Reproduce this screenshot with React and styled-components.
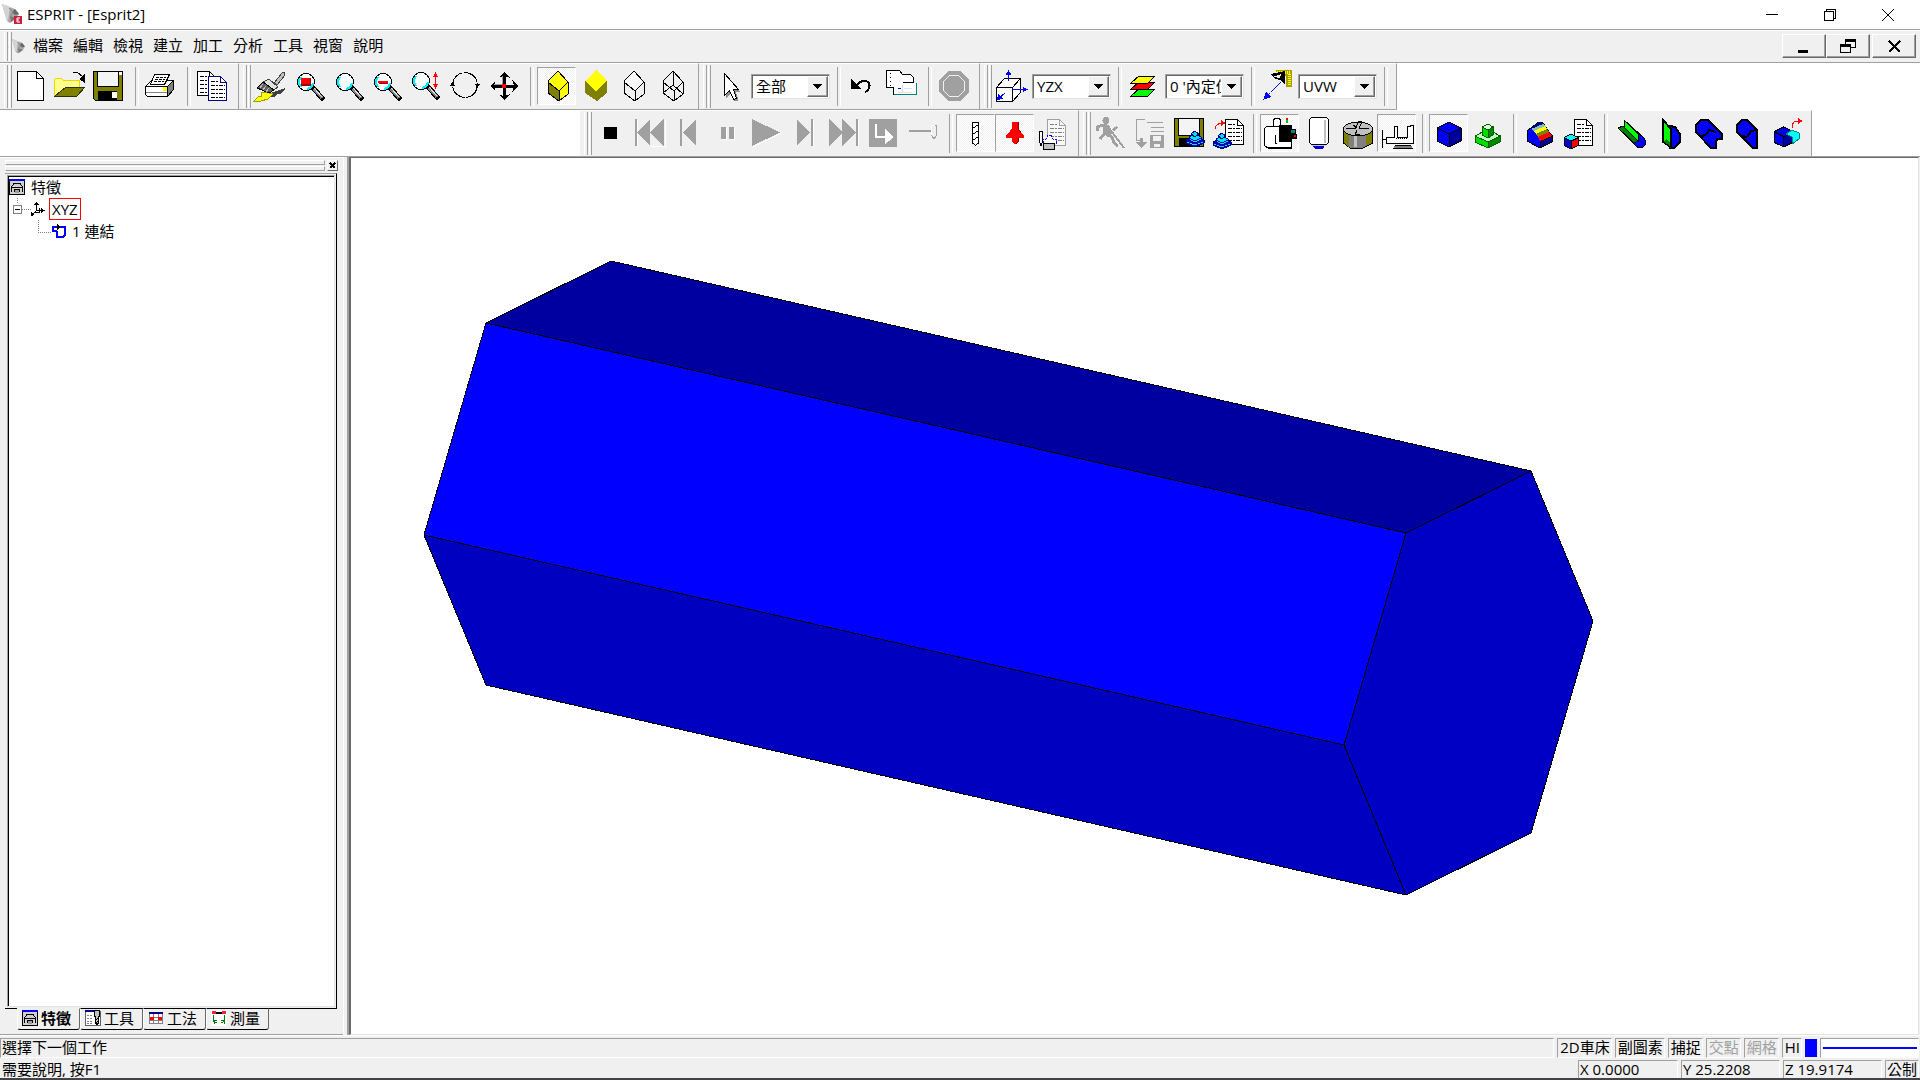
import React from 'react';
import styled, { createGlobalStyle, css } from 'styled-components';

const GlobalStyle = createGlobalStyle`
  * {
    box-sizing: border-box;
  }

  body {
    margin: 0;
    background-color: #f0f0f0;
    color: black;
  }

  body, button, select {
    font-family: 'Open Sans', 'Noto Sans CJK TC', sans-serif;
    font-size: 15px;
    line-height: 20px;
  }
`;

const Window = styled.div`
  min-height: 100vh;
  display: flex;
  flex-direction: column;
`;

/* title bar and menu bar */

const TitleBar = styled.header`
  display: flex;
  align-items: center;
  height: 30px;
  padding: 0 3px 0 2px;
  background-color: white;
  border-bottom: 1px solid #a0a0a0;
`;

const Title = styled.h1`
  flex: 1;
  margin: 0 0 2px 4px;
  font-size: 15px;
  font-weight: normal;
`;

const CaptionButton = styled.button`
  display: flex;
  align-items: center;
  justify-content: center;
  width: 58px;
  height: 28px;
  padding: 0;
  border: 0;
  background: none;
`;

const MenuBar = styled.nav`
  display: flex;
  align-items: center;
  height: 33px;
  padding-right: 4px;
  border-top: 1px solid white;
  border-bottom: 1px solid #a0a0a0;
`;

const MenuItem = styled.button`
  padding: 0 5px 3px;
  border: 0;
  background: none;
  white-space: nowrap;
`;

const Fill = styled.div`
  flex: 1;
`;

const ChildButton = styled.button`
  display: flex;
  align-items: center;
  justify-content: center;
  width: 44px;
  height: 24px;
  padding: 0;
  margin: 0 0 1px ${props => props.$apart ? '2px' : '0'};
  background-color: #f0f0f0;
  border: 1px solid;
  border-color: white #696969 #696969 white;
  box-shadow: inset -1px -1px 0 #a0a0a0;
`;

/* toolbars */

const ToolRow = styled.div`
  display: flex;
  background-color: white;
`;

const RowSpace = styled.div`
  flex: ${props => props.$width ? `0 0 ${props.$width}` : '1'};
  border-bottom: ${props => props.$ruled ? '1px solid #a0a0a0' : '0'};
`;

const Band = styled.div`
  display: flex;
  height: 47px;
  padding: 3px 5px 0 0;
  background-color: #f0f0f0;
  border: 1px solid #a0a0a0;
  border-top-color: white;
  border-left: 0;
`;

const Grip = styled.div`
  display: flex;
  gap: 1px;
  flex: none;
  width: 12px;
  height: ${props => props.$menu ? '29px' : '43px'};
  margin-top: ${props => props.$menu ? '0' : '-2px'};
  padding-left: 4px;

  &::before, &::after {
    content: '';
    width: 3px;
    border-left: 1px solid white;
    border-right: 1px solid #a0a0a0;
  }
`;

const Divider = styled.div`
  width: 13px;
  height: 39px;
  padding-left: 6px;

  &::before {
    content: '';
    display: block;
    width: 2px;
    height: 100%;
    border-left: 1px solid #a0a0a0;
    border-right: 1px solid white;
  }
`;

const pressed = css`
  border-color: #a0a0a0 white white #a0a0a0;
  background: repeating-conic-gradient(white 0 25%, #f0f0f0 0 50%) 0 0 / 2px 2px;
`;

const ToolButton = styled.button`
  flex: none;
  width: 39px;
  height: 38px;
  padding: 2px;
  border: 1px solid transparent;
  background: none;
  ${props => props.$on && pressed}

  svg {
    display: block;
    width: 32px;
    height: 32px;
    overflow: visible;
  }
`;

const ComboBox = styled.div`
  display: flex;
  flex: none;
  width: 79px;
  height: 25px;
  margin: 7px 1px 0;
  padding: 1px;
  background-color: white;
  border: 1px solid;
  border-color: #a0a0a0 #e3e3e3 #e3e3e3 #a0a0a0;
  box-shadow: inset 1px 1px 0 #696969;

  select {
    appearance: none;
    flex: 1;
    min-width: 0;
    padding: 0 0 2px 3px;
    border: 0;
    background: none;
    color: black;
    outline: 0;
  }
`;

const ComboArrow = styled.span`
  display: flex;
  align-items: center;
  justify-content: center;
  width: 21px;
  background-color: #f0f0f0;
  border: 1px solid;
  border-color: white #696969 #696969 white;
  box-shadow: inset -1px -1px 0 #a0a0a0;
`;

/* feature manager */

const Main = styled.main`
  display: flex;
  flex: 1;
`;

const SidePanel = styled.aside`
  display: flex;
  flex-direction: column;
  width: 343px;
  border-top: 1px solid white;
  border-bottom: 1px solid #a0a0a0;
`;

const Splitter = styled.div`
  width: 6px;
  border-left: 1px solid white;
  border-right: 2px solid #a0a0a0;
`;

const PanelHead = styled.div`
  display: flex;
  align-items: center;
  gap: 2px;
  padding: 2px 5px 0;
`;

const PanelGrip = styled.div`
  flex: 1;

  &::before, &::after {
    content: '';
    display: block;
    height: 3px;
    border: 1px solid;
    border-color: white #a0a0a0 #a0a0a0 white;
  }

  &::after {
    margin-top: 1px;
  }
`;

const PanelClose = styled.button`
  display: flex;
  align-items: center;
  justify-content: center;
  width: 11px;
  height: 11px;
  padding: 0;
  background-color: #f0f0f0;
  border: 1px solid;
  border-color: white #696969 #696969 white;
`;

const TabPage = styled.div`
  flex: 1;
  display: flex;
  margin: 2px 6px 0 5px;
  padding: 1px 1px 1px 2px;
  border: 1px solid;
  border-color: #a0a0a0 black black #f0f0f0;
  border-left: 0;
`;

const Tree = styled.ul`
  flex: 1;
  margin: 0;
  padding: 0;
  list-style: none;
  background-color: white;
  border: 1px solid;
  border-color: #a0a0a0 #e3e3e3 #e3e3e3 #a0a0a0;
  box-shadow: inset 1px 1px 0 black;

  ul {
    margin: 0;
    padding: 0;
    list-style: none;
  }
`;

const TreeRow = styled.div`
  display: flex;
  align-items: center;
  height: 22px;
  padding-left: ${props => props.$indent || '1px'};

  span {
    margin-left: 6px;
  }
`;

const Active = styled.b`
  height: 22px;
  margin-left: 4px;
  padding: 0 2px;
  border: 1px solid red;
  font-weight: normal;
`;

const Tabs = styled.div`
  display: flex;
  margin-top: -1px;
  padding: 0 0 4px 17px;
`;

const Tab = styled.button`
  display: flex;
  align-items: center;
  gap: 3px;
  width: 63px;
  height: 22px;
  padding: 0 0 2px 4px;
  background-color: #f0f0f0;
  border: 1px solid;
  border-color: ${props => props.$on ? '#f0f0f0' : 'black'} #696969 black white;
  border-radius: 0 0 3px 3px;
  font-weight: ${props => props.$on ? 'bold' : 'normal'};
  white-space: nowrap;
`;

/* model view */

const Viewport = styled.section`
  flex: 1;
  display: flex;
  min-width: 0;
  margin-right: 1px;
  background-color: white;
  border: 1px solid;
  border-width: 1px 1px 1px 2px;
  border-color: #696969 #e3e3e3 #e3e3e3 #696969;

  svg {
    flex: 1;
    width: 100%;
    min-width: 0;
  }
`;

/* status bar */

const StatusBar = styled.footer`
  display: flex;
  flex-direction: column;
  gap: 2px;
  padding: 2px 1px 0 0;
  border-top: 1px solid white;
  border-bottom: 2px solid #444347;
`;

const StatusRow = styled.div`
  display: flex;
  gap: 3px;
`;

const Cell = styled.div`
  flex: ${props => props.$grow ? '1' : 'none'};
  width: ${props => props.$width || 'auto'};
  height: ${props => props.$short ? '18px' : '20px'};
  padding: 0 1px 0 ${props => props.$short || props.$grow ? '1px' : '2px'};
  line-height: 16px;
  white-space: nowrap;
  color: ${props => props.$off ? '#a0a0a0' : 'black'};
  border: 1px solid;
  border-color: #a0a0a0 white white #a0a0a0;
  ${props => props.$short && 'border-bottom: 0;'}
  ${props => props.$plain && 'border-color: transparent;'}
`;

const Swatch = styled.div`
  width: 12px;
  height: 18px;
  margin-top: 1px;
  background-color: blue;
`;

const LineSample = styled.div`
  display: flex;
  align-items: center;
  width: 99px;
  padding: 0 1px 0 2px;
  background-color: white;
  border: 1px solid;
  border-color: #a0a0a0 white white #a0a0a0;

  &::before {
    content: '';
    flex: 1;
    height: 2px;
    background-color: blue;
  }
`;

/* drawings */

const Svg = ({ size = 32, width = size, height = size, children }) => (
  <svg
    width={width}
    height={height}
    viewBox={`0 0 ${width} ${height}`}
    fill="none"
    shapeRendering="crispEdges"
    aria-hidden="true"
  >
    {children}
  </svg>
);

const Cone = ({ size, badge }) => (
  <svg width={size} height={size} viewBox="0 0 21 21" aria-hidden="true">
    <path d="M0 0L13 5L17 10L14 15L8 19L5 17Z" fill="#a8a8a8" />
    <path d="M0 0L8 3L7 10L6 17L4 14Z" fill="#d4d4d4" />
    <path d="M13 5L17 10L13 11L10 8Z" fill="#686868" />
    <path d="M8 12L14 14L9 18Z" fill="#787878" />
    <path d="M7 4L11 8L9 12" stroke="#888" fill="none" />
    {badge && <rect x="12" y="12" width="8" height="8" fill="#c4203f" />}
    {badge && <path d="M18 14H15V18H18M15 16H17" stroke="#fff" fill="none" />}
  </svg>
);

const Lens = ({ x = 13, y = 12, children }) => (
  <g>
    <path d={`M${x + 8} ${y + 7}L${x + 16} ${y + 16}`} stroke="#000" strokeWidth="5" strokeLinecap="square" />
    <path d={`M${x + 8} ${y + 7}L${x + 16} ${y + 16}`} stroke="#808080" strokeWidth="3" />
    <path d={`M${x + 8} ${y + 6}L${x + 16} ${y + 15}`} stroke="#e0e0e0" />
    <circle cx={x} cy={y} r="8.5" fill="#f8ffff" stroke="#000" />
    <path d={`M${x - 5} ${y - 5}Q${x - 9} ${y} ${x - 5} ${y + 5}M${x + 1} ${y + 7}Q${x + 6} ${y + 6} ${x + 7} ${y + 1}`} stroke="#00f0ff" strokeWidth="2" />
    {children}
  </g>
);

const Page = ({ x, y, w, h, color = '#000', ink = '#000', fill = '#fff' }) => (
  <g>
    <path d={`M${x} ${y}H${x + w - 6}L${x + w} ${y + 6}V${y + h}H${x}Z`} fill={fill} stroke={color} />
    <path d={`M${x + w - 6} ${y}V${y + 6}H${x + w}`} stroke={color} />
    <path
      d={`M${x + 2} ${y + 5}H${x + w - 8}M${x + 2} ${y + 9}H${x + w - 2}M${x + 2} ${y + 13}H${x + w - 2}M${x + 2} ${y + 17}H${x + w - 2}M${x + 2} ${y + 21}H${x + w - 2}`}
      stroke={ink}
      strokeDasharray="4 1 2 1"
    />
  </g>
);

const Disk = () => (
  <g>
    <path d="M0.5 1.5H29.5V30.5H2.5L0.5 28.5Z" fill="#808000" stroke="#000" />
    <path d="M4.5 1.5H25.5V16.5H4.5Z" fill="#f4f4f4" stroke="#000" />
    <path d="M5 21H24V30H5Z" fill="#000" />
    <path d="M19 22H24V28H19ZM26 2H29V5H26Z" fill="#fff" />
  </g>
);

const Block = ({ x = 0, y = 0, top, left, right, line = '#000' }) => (
  <g transform={`translate(${x} ${y})`} stroke={line} strokeLinejoin="round">
    <path d="M11 1L1 11V23L12 31L21 24V12Z" fill={top} />
    <path d="M1 12L12 21V31L1 23Z" fill={left} />
    <path d="M21 12L12 21V31L21 24Z" fill={right} />
  </g>
);

const IsoCube = ({ x = 0, y = 0, s = 1, top, left, right }) => (
  <g transform={`translate(${x} ${y}) scale(${s})`} stroke="#000" strokeWidth={1 / s} strokeLinejoin="round">
    <path d="M12 0L24 6L12 12L0 6Z" fill={top} />
    <path d="M0 6L12 12V25L0 19Z" fill={left} />
    <path d="M24 6L12 12V25L24 19Z" fill={right} />
  </g>
);

const Stack = ({ x, y }) => (
  <g transform={`translate(${x} ${y})`} stroke="#000080">
    <path d="M0 9L9 5L18 9V12L9 16L0 12Z" fill="#0000c0" />
    <path d="M3 6L9 3L15 6V9L9 12L3 9Z" fill="#00e0f0" />
    <path d="M5 3L9 0L13 3L9 6Z" fill="#00e0f0" />
    <path d="M3 7L9 10L15 7" stroke="#0000c0" />
    <path d="M1 11L9 14L17 11" stroke="#00e0f0" strokeDasharray="2 1" />
  </g>
);

const GREY = '#a0a0a0';

const icons = {
  new: (
    <g stroke="#000">
      <path d="M2.5 1.5H21.5L28.5 8.5V30.5H2.5Z" fill="#fff" />
      <path d="M21.5 1.5V8.5H28.5" />
    </g>
  ),
  open: (
    <g>
      <path d="M0 26V10L2 8H7L9 10H25V17H13L1 26Z" fill="#ffff8c" stroke="#e8d800" />
      <path d="M12 17H31L23 26H1Z" fill="#808000" stroke="#303000" />
      <path d="M19 2H23L29 7V9" stroke="#000" strokeWidth="1" />
      <path d="M25 9L31 4V13Z" fill="#000" />
    </g>
  ),
  save: <Disk />,
  print: (
    <g stroke="#000">
      <path d="M0.5 16.5L6.5 10.5H28.5V19.5L22.5 26.5H2.5L0.5 24.5Z" fill="#fff" />
      <path d="M22.5 16.5L28.5 10.5V19.5L22.5 26.5Z" fill="#808080" />
      <path d="M9.5 4.5H24.5L19.5 14.5H5.5Z" fill="#fff" />
      <path d="M11 7.5H21M10 9.5H20M9 11.5H19" strokeDasharray="3 1" />
      <path d="M0.5 16.5H22.5V24.5" />
      <path d="M1 22.5H22" stroke="#808080" />
      <path d="M18 17H22V21H18Z" fill="#ff0" stroke="none" />
    </g>
  ),
  pages: (
    <g>
      <Page x={0.5} y={1.5} w={18} h={24} />
      <Page x={11.5} y={6.5} w={18} h={24} color="#000080" />
    </g>
  ),
  brush: (
    <g>
      <path d="M14 24L31 18V20L26 24H24L20 27H14Z" fill="#404040" />
      <path d="M0 31L4 27L8 26L7 22L12 22L19 24L14 29L7 31Z" fill="#ff0" stroke="#a0a000" />
      <path d="M20 13L28 3L30 2L31 5L23 15Z" fill="#c0c0c0" stroke="#404040" />
      <path d="M9 12L15 9L24 17L20 20Z" fill="#e0e0e0" stroke="#404040" />
      <path d="M9 12L3 18L15 23L20 20Z" fill="#606060" stroke="#000" />
      <path d="M9 14L6 18M12 16L9 20M15 18L12 22" stroke="#c0c0c0" />
    </g>
  ),
  zoomWindow: (
    <Lens>
      <path d="M8 8H18V16H8Z" fill="#a00000" />
      <path d="M8 8H17V14H8Z" fill="#f00" />
    </Lens>
  ),
  zoom: <Lens />,
  zoomOut: (
    <Lens x={12}>
      <path d="M7 11H17V13H7Z" fill="#f00" />
      <path d="M8 13H17V14H8Z" fill="#a00000" />
    </Lens>
  ),
  zoomDynamic: (
    <g>
      <Lens x={11} y={11} />
      <path d="M25.5 4V17" stroke="#f00" />
      <path d="M23 7L25.5 2L28 7ZM23 14H28L25.5 19Z" fill="#f00" />
    </g>
  ),
  rotate: (
    <g>
      <circle cx="16" cy="15" r="12.5" stroke="#000" strokeDasharray="18 1" />
      <path d="M1 16L4 11L6 16ZM26 14H31L28 19Z" fill="#000" />
    </g>
  ),
  pan: (
    <g>
      <path d="M16 4V28M4 16H28" stroke="#000" strokeWidth="3" />
      <path d="M14.5 6V14M6 14.5H14" stroke="#a0a0a0" />
      <path d="M10 8L16 2L22 8L17 6H15ZM10 24L16 30L22 24L17 26H15ZM8 10L2 16L8 22L6 17V15ZM24 10L30 16L24 22L26 17V15Z" fill="#000" />
      <circle cx="16" cy="16" r="2.5" fill="#f00" />
    </g>
  ),
  shadedEdges: <Block x={7} top="#ff0" left="#808000" right="#ff0" />,
  shaded: (
    <g>
      <path d="M17 0L28 11L17 22L6 11Z" fill="#ff0" />
      <path d="M6 11L17 21L28 11V23L18 31L6 23Z" fill="#808000" />
    </g>
  ),
  hidden: <Block x={5} top="#f8f8f8" left="#f0f0f0" right="#f0f0f0" />,
  wire: (
    <g>
      <Block x={5} top="none" left="none" right="none" />
      <path d="M16 1V15L6 23M16 15L26 24" stroke="#000" />
    </g>
  ),
  cursor: (
    <g>
      <path d="M12 6V28L17 23L20 31H24V28L22 22H26Z" fill="#909090" />
      <path d="M10.5 3.5V25.5L15.5 20.5L19.5 29.5L22.5 28.5L19.5 19.5H24.5Z" fill="#fff" stroke="#000" />
    </g>
  ),
  undo: (
    <g>
      <path d="M9 17Q13 10 19 11Q24 13 22 18Q21 21 18 22" stroke="#000" strokeWidth="2" />
      <path d="M4 9V19H14Z" fill="#000" />
    </g>
  ),
  paste: (
    <g>
      <path d="M0.5 0.5H13.5L16.5 4.5H24.5L27.5 7.5V17.5H0.5Z" fill="#fff" stroke="#000" />
      <path d="M4.5 3V16" stroke="#000" strokeDasharray="1 3" />
      <path d="M7.5 24.5V14.5H14.5L17.5 12.5H30.5V24.5Z" fill="#fff" stroke="none" />
      <path d="M7 24.5H30.5V12.5" stroke="#008080" />
      <path d="M7.5 24.5V17.5M17 12.5H28" stroke="#000" />
      <path d="M12 18H15V19H12Z" fill="#00f" />
      <path d="M18 18.5H26M12 22.5H26M16.5 15V23" stroke="#e0e0e0" />
    </g>
  ),
  octagon: (
    <g>
      <path d="M10 1H22L31 10V22L22 31H10L1 22V10Z" fill={GREY} />
      <path d="M11.5 5.5H20.5L26.5 11.5V20.5L20.5 26.5H11.5L5.5 20.5V11.5Z" stroke="#f0f0f0" />
    </g>
  ),
  workplane: (
    <g>
      <path d="M1.5 17.5L9.5 8.5H25.5V22.5L17.5 31.5H1.5Z" fill="#fff" stroke="#000" />
      <path d="M1.5 17.5H17.5V31.5M17.5 17.5L25.5 8.5" stroke="#000" />
      <path d="M13.5 11V2M17 19.5H30M10 23L4 28" stroke="#00f" />
      <path d="M10.5 5L13.5 0L16.5 5ZM28 17L33 19.5L28 22ZM2 30L3 24L8 29Z" fill="#00f" />
    </g>
  ),
  layers: (
    <g stroke="#000">
      <path d="M3 26L11 19H27L20 26Z" fill="#0f0" />
      <path d="M3 19L11 12H27L20 19Z" fill="#f00" />
      <path d="M3 13L11 6H27L20 13Z" fill="#ff0" />
    </g>
  ),
  uvw: (
    <g>
      <path d="M15 0H31V17H25V6H17Z" fill="#a8a000" />
      <path d="M16 2H30M28 4V16" stroke="#ff0" strokeDasharray="1 1" strokeWidth="3" />
      <path d="M9 4L24 1V15L20 10L14 9Z" fill="#000" />
      <path d="M12 7L20 4L19 8Z" fill="#f0f0f0" />
      <path d="M20 12L5 27" stroke="#00f" strokeDasharray="14 2" />
      <path d="M2 30L5 22L10 27Z" fill="#00f" />
    </g>
  ),
  stop: <path d="M9 10H22V22H9Z" fill="#000" />,
  first: (
    <g>
      <path d="M3 3V30M17 29L31 30V3" stroke="#fff" />
      <path d="M1 2H3V29H1ZM16 2V29L3 15.5ZM30 2V29L16 15.5Z" fill={GREY} />
    </g>
  ),
  back: <path d="M7 2H9V29H7ZM23 2V29L10 15.5Z" fill={GREY} />,
  pause: (
    <g>
      <path d="M10 11H15V23H10ZM18 11H23V23H18Z" fill="#fff" />
      <path d="M9 10H14V22H9ZM17 10H22V22H17Z" fill={GREY} />
    </g>
  ),
  play: (
    <g>
      <path d="M2 30L30 16" stroke="#fff" />
      <path d="M1 2L29 15.5L1 29Z" fill={GREY} />
    </g>
  ),
  forward: (
    <g>
      <path d="M23.5 3V30" stroke="#fff" />
      <path d="M7 2L20 15.5L7 29ZM21 2H23V29H21Z" fill={GREY} />
    </g>
  ),
  last: (
    <g>
      <path d="M29.5 3V30" stroke="#fff" />
      <path d="M0 2L14 15.5L0 29ZM13 2L27 15.5L13 29ZM27 2H29V29H27Z" fill={GREY} />
    </g>
  ),
  into: (
    <g>
      <path d="M1 2H29V30H1Z" fill={GREY} />
      <path d="M8 7V20H18" stroke="#fff" strokeWidth="2" />
      <path d="M17 12L25 19V21L17 27Z" fill="#fff" />
    </g>
  ),
  speed: (
    <g>
      <path d="M2 14.5H24" stroke="#fff" />
      <path d="M2 13.5H24" stroke={GREY} strokeWidth="2" />
      <path d="M24.5 8.5H29.5V18L27 22L24.5 18Z" fill="#f0f0f0" stroke={GREY} />
      <path d="M24.5 18V8.5H28" stroke="#fff" />
    </g>
  ),
  drill: (
    <g>
      <path d="M13.5 5.5H19.5V26L16.5 28.5L13.5 26Z" fill="#fff" stroke="#000" />
      <path d="M14 11L19 8M14 17L19 14M14 23L19 20" stroke="#000" strokeWidth="1" />
    </g>
  ),
  holder: (
    <g>
      <path d="M14 5H20V11L23 16L26 18V21H20V25L18 27H16L14 25V21H8V18L11 16L14 11Z" fill="#f00" />
      <path d="M20 5V11L23 16M20 21V25L18 27" stroke="#900000" />
    </g>
  ),
  toolDoc: (
    <g>
      <Page x={10.5} y={2.5} w={18} h={26} color="#a0a0a0" ink="#808080" fill="#f8f8f8" />
      <path d="M2.5 14.5H5.5V24L4 29L2.5 24Z" fill="#fff" stroke="#000" />
      <path d="M6 26V22H9L11 18H14L16 22H19V26Z" fill="#fff" stroke="#00f" strokeDasharray="2 1" />
      <path d="M6.5 26.5H17.5V32H6.5Z" fill="#c0c0c0" stroke="#000" />
    </g>
  ),
  run: (
    <g>
      <circle cx="12" cy="3.5" r="3.5" fill={GREY} />
      <path d="M3 14L3 10L9 8H13M12 17L18 20L20 26L24 29M11 16L6 22" stroke={GREY} strokeWidth="3" />
      <path d="M9 8H15L18 12L23 9L24 11L18 16L14 20L9 16Z" fill={GREY} />
      <path d="M16 10L31 32" stroke="#fff" />
      <path d="M15 11L30 31" stroke={GREY} strokeWidth="2" />
    </g>
  ),
  saveOp: (
    <g>
      <path d="M12 2.500H3V23H8" stroke={GREY} strokeWidth="1" />
      <path d="M7 21V25H2L8 31L14 25H10V21Z" fill={GREY} />
      <path d="M14 5.5H30M18 10.5H31M18 14.5H31" stroke={GREY} />
      <path d="M17 18H31V31H17Z" fill={GREY} />
      <path d="M20 19H28V24H20ZM21 27H27V30H21Z" fill="#f0f0f0" />
    </g>
  ),
  saveStock: (
    <g>
      <path d="M2.5 1.5H31.5V29.5H2.5Z" fill="#808000" stroke="#000" />
      <path d="M6.5 1.5H27.5V18.5H6.5Z" fill="#f4f4f4" stroke="#000" />
      <path d="M7 21H20V30H7Z" fill="#000" />
      <Stack x={14} y={14} />
    </g>
  ),
  loadStock: (
    <g>
      <Page x={14.5} y={2.5} w={18} h={25} />
      <Stack x={2} y={16} />
      <path d="M4 12Q5 6 12 6" stroke="#f00" strokeWidth="1" />
      <path d="M10 3L15 6L10 9Z" fill="#f00" />
    </g>
  ),
  machine: (
    <g>
      <path d="M10.5 10V3L12.5 1H15.5L17.5 3V10" fill="#fff" stroke="#000" />
      <path d="M1.5 11.5L3.5 9.5H28.5V30.5H4L1.5 28.5Z" fill="#fff" stroke="#000" />
      <path d="M3 30H29V32H5Z" fill="#000" />
      <path d="M16 8H29V25H16Z" fill="#000" />
      <path d="M12.5 18V26H14" stroke="#000" />
      <path d="M23 1H25V3H23Z" fill="#f00" />
      <path d="M23 3H25V6H23Z" fill="#0c0" />
      <path d="M23 6H25V8H23Z" fill="#fff" />
      <path d="M27 12H32V16H27Z" fill="#008080" stroke="#000" />
      <path d="M29 17H34V22H29Z" fill="#000" />
      <path d="M31 18H33V20H31Z" fill="#f00" />
    </g>
  ),
  spindle: (
    <g>
      <path d="M9 26H24L22 30L20 32H13L11 30Z" fill="#0000d0" />
      <path d="M7.5 2.5L9.5 0.5H24.5L26.5 2.5V25.5L24.5 27.5H9.5L7.5 25.5Z" fill="#fff" stroke="#000" strokeWidth="1" />
      <path d="M23 3V26" stroke="#c0c0c0" strokeWidth="2" />
      <path d="M10 28.5H24" stroke="#c0c0ff" />
    </g>
  ),
  chuck: (
    <g>
      <path d="M2.5 12V26L9 31H22L31.5 26V12Z" fill="#808080" stroke="#000" />
      <path d="M3 14L8 18V30L3 26ZM25 17L31 13V26L25 29Z" fill="#808000" />
      <ellipse cx="17" cy="12" rx="14.5" ry="7" fill="#c0c0c0" stroke="#000" />
      <path d="M5 11L14 12L18 4L21 5L18 11L28 12M16 13L14 18L19 17M12 8L16 11" stroke="#000" />
      <path d="M14 19V30" stroke="#c0c0c0" strokeWidth="3" />
    </g>
  ),
  fixture: (
    <g stroke="#000">
      <path d="M2.5 13V31M2 22.5H8" />
      <path d="M6.5 20.5H14.5V9.5H17.5V20.5H27.5V9.5H30.5V8.5H33.5V26.5H6.5Z" fill="#fff" />
      <path d="M16 21.5H28" strokeDasharray="1 1" />
      <path d="M15 28.5H31M13 31.5H33" />
      <path d="M14 30H32" stroke="#808080" strokeWidth="2" />
    </g>
  ),
  solid: <IsoCube x={5} y={5} top="#00f" left="#0000f0" right="#00009c" />,
  part: (
    <g stroke="#006000">
      <path d="M4 19L17 12L29 19V25L17 31L4 25Z" fill="#0d0" />
      <path d="M17 25L29 19V25L17 31Z" fill="#008800" />
      <path d="M4 19L17 12L29 19L17 25Z" fill="#c0ffc0" />
      <path d="M11 10L17 7L22 10V18L17 21L11 18Z" fill="#0d0" />
      <path d="M17 13L22 10V18L17 21Z" fill="#008800" />
      <path d="M11 10L17 7L22 10L17 13Z" fill="#e0ffe0" />
    </g>
  ),
  rainbow: (
    <g stroke="#000">
      <path d="M4 14L16 5L20 6L29 19V25L17 31L4 24Z" fill="#00f" />
      <path d="M17 25L29 19V25L17 31Z" fill="#000090" />
      <path d="M16 5L20 6L22 9L11 12L8 11Z" fill="#000080" stroke="none" />
      <path d="M8 12L20 7L23 10L11 14Z" fill="#80c0c0" stroke="none" />
      <path d="M11 14L22 9L24 12L13 17Z" fill="#ff0" stroke="none" />
      <path d="M13 17L24 12L26 15L15 20Z" fill="#808000" stroke="none" />
      <path d="M15 20L26 15L29 19L17 24Z" fill="#f00" stroke="none" />
    </g>
  ),
  cubeDoc: (
    <g>
      <Page x={12.5} y={2.5} w={18} h={26} />
      <IsoCube x={2} y={17} s={0.6} top="#0ff" left="#0000d0" right="#f00" />
    </g>
  ),
  slotA: (
    <g stroke="#000">
      <path d="M4 11L10 9V3L30 21Q34 26 29 30Q25 32 22 29Z" fill="#00f" />
      <path d="M10 3L12 5L24 17V24L10 12Z" fill="#0f0" />
      <path d="M4 11L9 9L24 24L20 26Z" fill="#008000" />
    </g>
  ),
  slotB: (
    <g stroke="#000">
      <path d="M17 9L22 10L27 17V25L21 31H17Z" fill="#00f" strokeWidth="2" />
      <path d="M10 3L18 12V30L10 25Z" fill="#0f0" strokeWidth="2" />
      <path d="M13 22L17 25V29L11 25Z" fill="#008000" stroke="none" />
    </g>
  ),
  slotC: (
    <g stroke="#000" strokeWidth="2">
      <path d="M4 8L9 3H16L30 17V22H25L24 25V31H19L4 15Z" fill="#00f" />
      <path d="M14 18L17 13L24 15M14 18L9 19" />
    </g>
  ),
  slotD: (
    <g stroke="#000" strokeWidth="2">
      <path d="M6 8L11 3H16L26 13V31H22L6 15Z" fill="#00f" />
      <path d="M16 20L20 14L26 13M16 20L11 19" />
    </g>
  ),
  extract: (
    <g>
      <IsoCube x={4} y={10} s={0.8} top="#0000e0" left="#00f" right="#00009c" />
      <path d="M16 17L22 13L29 16V22L22 27V20Z" fill="#0ff" stroke="#008080" />
      <path d="M22 11V8L25 4H29" stroke="#f00" />
      <path d="M28 1L33 4L28 7Z" fill="#f00" />
    </g>
  )
};

const Tool = ({ name, label, on }) => (
  <ToolButton $on={on} aria-label={label || name} aria-pressed={on}>
    <Svg>{icons[name]}</Svg>
  </ToolButton>
);

const Combo = ({ label, value }) => (
  <ComboBox>
    <select aria-label={label} defaultValue={value}>
      <option>{value}</option>
    </select>
    <ComboArrow aria-hidden="true">
      <Svg width={9} height={5}><path d="M0 0H9L4.5 5Z" fill="#000" /></Svg>
    </ComboArrow>
  </ComboBox>
);

const FeatureIcon = () => (
  <Svg size={16}>
    <path d="M0.5 0.5H15.5V15.5H0.5Z" fill="#d0d0d0" stroke="#000" />
    <path d="M0 0H16V2H0Z" fill="#00f" />
    <path d="M2.5 13V8L5 4.5H11L13.5 8V13M2 8.5H14M5.5 13V10.5H10.5V13" stroke="#000" />
    <path d="M6 11H10V14H6Z" fill="#a0a0a0" />
  </Svg>
);

const AxesIcon = () => (
  <Svg width={14} height={14}>
    <path d="M5.5 2V8.5H13M5.5 8.5L1 13M3 10.5H8V6" stroke="#000" />
    <path d="M3 3L5.5 0L8 3ZM10 6L14 8.5L10 11ZM0 14V10L4 13Z" fill="#000" />
  </Svg>
);

const ChainIcon = () => (
  <Svg width={14} height={14}>
    <path d="M5 7H1V3H13V11L11 13H5V7" fill="#fff" stroke="#00f" strokeWidth="2" />
    <path d="M5 0L9 3L5 6Z" fill="#000" />
  </Svg>
);

const tabs = [
  { name: '特徵', icon: <FeatureIcon /> },
  {
    name: '工具',
    icon: (
      <Svg size={16}>
        <path d="M0.5 1.5H15.5V15.5H0.5Z" fill="#fff" stroke="#606060" />
        <path d="M0 0H11V2H0Z" fill="#000080" />
        <path d="M2 5.5H8M2 8.5H8M2 11.5H8M2 13.5H8" stroke="#808080" strokeDasharray="2 1" />
        <path d="M9.5 0.5H14.5V6L13.5 7V13L12 15L10.5 13V7L9.5 6Z" fill="#c0c0c0" stroke="#000" />
        <path d="M10 10L14 8M10 13L14 11" stroke="#000" />
      </Svg>
    )
  },
  {
    name: '工法',
    icon: (
      <Svg size={16}>
        <path d="M1.5 2.5H14.5V13.5H1.5Z" fill="#fff" stroke="#808080" />
        <path d="M1 2H15V4H1Z" fill="#000080" />
        <path d="M5.5 4V13M10.5 4V13M2 7H14M2 10.5H14" stroke="#808080" />
        <path d="M2 7H6V10H2ZM10 7H14V10H10Z" fill="#f00" />
      </Svg>
    )
  },
  {
    name: '測量',
    icon: (
      <Svg size={16}>
        <path d="M0 0H16V16H0Z" fill="#fff" />
        <path d="M3 3H13" stroke="#000" strokeWidth="2" />
        <path d="M1 1H5V4H1ZM11 1H15V4H11Z" fill="#f02040" />
        <path d="M2.5 5V11L6 13M13.5 5V11L10 13M3 13.5V10.5H6M13 13.5V10.5H10" stroke="#008000" />
      </Svg>
    )
  }
];

/* the hexagonal bar shown in the model view */
const Model = () => (
  <svg viewBox="351 158 1567 876" role="img" aria-label="Solid model" shapeRendering="crispEdges">
    <g stroke="#000" strokeLinejoin="round">
      <polygon points="611,261 1531,471 1406,533 486,323" fill="#0000a0" />
      <polygon points="486,323 1406,533 1344,745 424,535" fill="#0000ff" />
      <polygon points="424,535 1344,745 1406,895 486,685" fill="#0000c0" />
      <polygon points="1531,471 1593,621 1531,833 1406,895 1344,745 1406,533" fill="#0000c4" />
    </g>
  </svg>
);

const menus = ['檔案', '編輯', '檢視', '建立', '加工', '分析', '工具', '視窗', '說明'];

const App = () => (
  <Window>
    <GlobalStyle />
    <TitleBar>
      <Cone size={21} badge />
      <Title>ESPRIT - [Esprit2]</Title>
      <CaptionButton aria-label="Minimize">
        <Svg size={12}><path d="M0 5.5H12" stroke="#000" /></Svg>
      </CaptionButton>
      <CaptionButton aria-label="Restore">
        <Svg size={12}><path d="M0.5 2.5H9.5V11.5H0.5ZM2.5 2V0.5H11.5V9.5H10" stroke="#000" /></Svg>
      </CaptionButton>
      <CaptionButton aria-label="Close">
        <svg width="12" height="12" aria-hidden="true"><path d="M0 0L12 12M12 0L0 12" stroke="#000" /></svg>
      </CaptionButton>
    </TitleBar>

    <MenuBar>
      <Grip $menu />
      <Cone size={16} />
      {menus.map(name => <MenuItem key={name}>{name}</MenuItem>)}
      <Fill />
      <ChildButton aria-label="Minimize document">
        <Svg width={12} height={14}><path d="M0 11H10V14H0Z" fill="#000" /></Svg>
      </ChildButton>
      <ChildButton aria-label="Restore document">
        <Svg width={16} height={14}>
          <path d="M5.5 5V0.5H15.5V8.5H11M0.5 5.5H10.5V13.5H0.5Z" stroke="#000" />
          <path d="M5 0H16V3H5ZM0 5H11V8H0Z" fill="#000" />
        </Svg>
      </ChildButton>
      <ChildButton $apart aria-label="Close document">
        <Svg size={13}><path d="M1 1L12 12M12 1L1 12" stroke="#000" strokeWidth="2" /></Svg>
      </ChildButton>
    </MenuBar>

    <ToolRow>
      <Band>
        <Grip />
        <Tool name="new" />
        <Tool name="open" />
        <Tool name="save" />
        <Divider />
        <Tool name="print" />
        <Divider />
        <Tool name="pages" />
      </Band>
      <Band>
        <Grip />
        <Tool name="brush" />
        <Tool name="zoomWindow" />
        <Tool name="zoom" />
        <Tool name="zoomOut" />
        <Tool name="zoomDynamic" />
        <Tool name="rotate" />
        <Tool name="pan" />
        <Divider />
        <Tool name="shadedEdges" on />
        <Tool name="shaded" />
        <Tool name="hidden" label="hidden lines" />
        <Tool name="wire" />
      </Band>
      <Band>
        <Grip />
        <Tool name="cursor" />
        <Combo label="Selection filter" value="全部" />
        <Divider />
        <Tool name="undo" />
        <Tool name="paste" />
        <Divider />
        <Tool name="octagon" label="cancel" />
      </Band>
      <Band>
        <Grip />
        <Tool name="workplane" />
        <Combo label="Work plane" value="YZX" />
        <Divider />
        <Tool name="layers" />
        <Combo label="Layer" value="0 '內定值'" />
        <Divider />
        <Tool name="uvw" />
        <Combo label="UVW axes" value="UVW" />
        <Divider />
      </Band>
      <RowSpace />
    </ToolRow>

    <ToolRow>
      <RowSpace $width="580px" $ruled />
      <Band>
        <Grip />
        <Tool name="stop" />
        <Tool name="first" />
        <Tool name="back" />
        <Tool name="pause" />
        <Tool name="play" />
        <Tool name="forward" />
        <Tool name="last" />
        <Tool name="into" />
        <Tool name="speed" />
        <Divider />
        <Tool name="drill" on />
        <Tool name="holder" on />
        <Tool name="toolDoc" />
      </Band>
      <Band>
        <Grip />
        <Tool name="run" />
        <Tool name="saveOp" />
        <Tool name="saveStock" />
        <Tool name="loadStock" />
        <Divider />
        <Tool name="machine" on />
        <Tool name="spindle" />
        <Tool name="chuck" />
        <Tool name="fixture" on />
        <Divider />
        <Tool name="solid" on />
        <Tool name="part" />
        <Divider />
        <Tool name="rainbow" />
        <Tool name="cubeDoc" />
        <Divider />
        <Tool name="slotA" />
        <Tool name="slotB" />
        <Tool name="slotC" />
        <Tool name="slotD" />
        <Tool name="extract" />
      </Band>
      <RowSpace $ruled />
    </ToolRow>

    <Main>
      <SidePanel>
        <PanelHead>
          <PanelGrip />
          <PanelClose aria-label="Close panel">
            <Svg width={7} height={7}><path d="M1 1L6 6M6 1L1 6" stroke="#000" strokeWidth="2" /></Svg>
          </PanelClose>
        </PanelHead>
        <TabPage>
          <Tree>
            <li>
              <TreeRow>
                <FeatureIcon />
                <span>特徵</span>
              </TreeRow>
              <ul>
                <li>
                  <TreeRow $indent="5px">
                    <Svg width={18} height={22}>
                      <path d="M4.5 0V6M9 11.5H18" stroke="#808080" strokeDasharray="1 1" />
                      <path d="M0.5 7.5H8.5V15.5H0.5Z" fill="#fff" stroke="#808080" />
                      <path d="M2 11.5H7" stroke="#000" />
                    </Svg>
                    <AxesIcon />
                    <Active>XYZ</Active>
                  </TreeRow>
                  <ul>
                    <li>
                      <TreeRow $indent="30px">
                        <Svg width={14} height={22}>
                          <path d="M0.5 0V12.5H14" stroke="#808080" strokeDasharray="1 1" />
                        </Svg>
                        <ChainIcon />
                        <span>1 連結</span>
                      </TreeRow>
                    </li>
                  </ul>
                </li>
              </ul>
            </li>
          </Tree>
        </TabPage>
        <Tabs role="tablist">
          {tabs.map((tab, i) => (
            <Tab key={tab.name} role="tab" aria-selected={i === 0} $on={i === 0}>
              {tab.icon}
              {tab.name}
            </Tab>
          ))}
        </Tabs>
      </SidePanel>
      <Splitter />
      <Viewport>
        <Model />
      </Viewport>
    </Main>

    <StatusBar>
      <StatusRow>
        <Cell $grow>選擇下一個工作</Cell>
        <Cell>2D車床</Cell>
        <Cell>副圖素</Cell>
        <Cell>捕捉</Cell>
        <Cell $off>交點</Cell>
        <Cell $off>網格</Cell>
        <Cell>HI</Cell>
        <Swatch />
        <LineSample />
      </StatusRow>
      <StatusRow>
        <Cell $grow $short $plain>需要說明, 按F1</Cell>
        <Cell $short $width="100px">X 0.0000</Cell>
        <Cell $short $width="99px">Y 25.2208</Cell>
        <Cell $short $width="99px">Z 19.9174</Cell>
        <Cell $short>公制</Cell>
      </StatusRow>
    </StatusBar>
  </Window>
);

export default App;
